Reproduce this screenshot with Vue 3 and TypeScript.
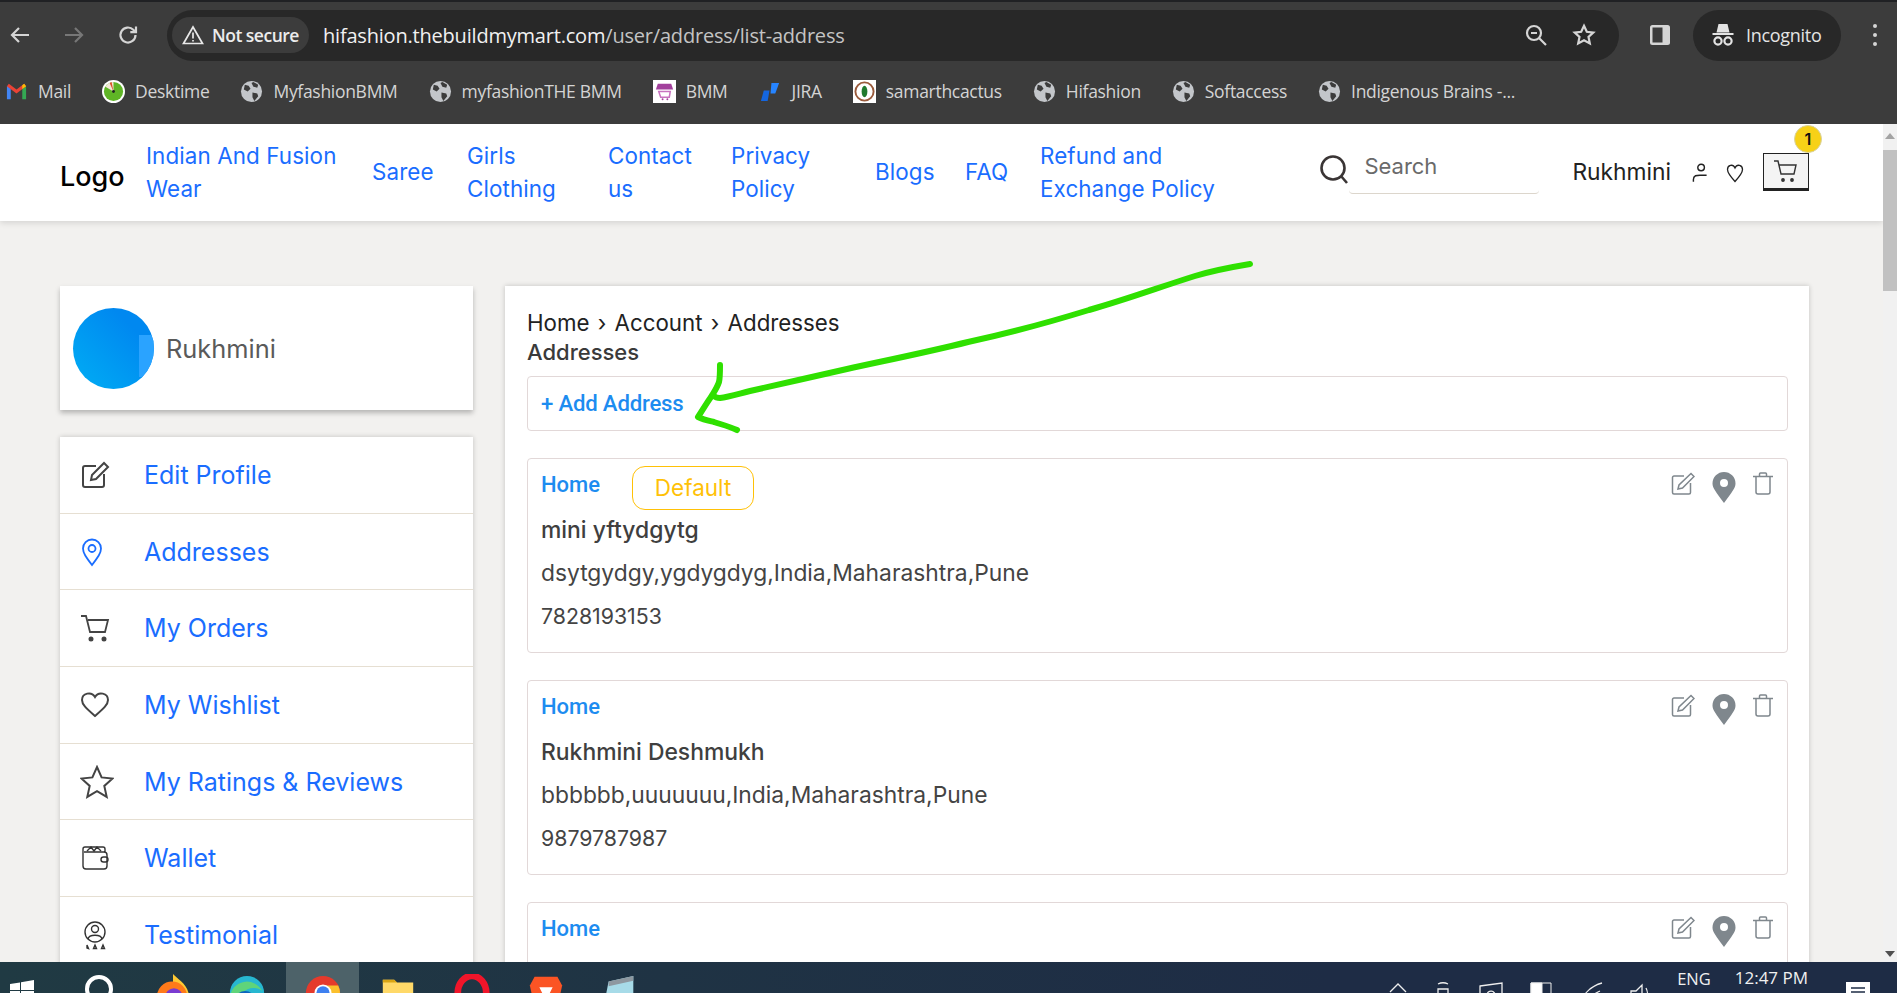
<script setup lang="ts">
const bookmarks = [
  { name: 'Mail', icon: 'gmail' },
  { name: 'Desktime', icon: 'desktime' },
  { name: 'MyfashionBMM', icon: 'globe' },
  { name: 'myfashionTHE BMM', icon: 'globe' },
  { name: 'BMM', icon: 'bmm' },
  { name: 'JIRA', icon: 'jira' },
  { name: 'samarthcactus', icon: 'cactus' },
  { name: 'Hifashion', icon: 'globe' },
  { name: 'Softaccess', icon: 'globe' },
  { name: 'Indigenous Brains -...', icon: 'globe' },
]

const navLinks = [
  { label: 'Indian And Fusion Wear', width: 194 },
  { label: 'Saree', width: 63 },
  { label: 'Girls Clothing', width: 109 },
  { label: 'Contact us', width: 91 },
  { label: 'Privacy Policy', width: 112 },
  { label: 'Blogs', width: 58 },
  { label: 'FAQ', width: 43 },
  { label: 'Refund and Exchange Policy', width: 180 },
]

const menu = [
  { label: 'Edit Profile', icon: 'edit' },
  { label: 'Addresses', icon: 'pin' },
  { label: 'My Orders', icon: 'cart' },
  { label: 'My Wishlist', icon: 'heart' },
  { label: 'My Ratings & Reviews', icon: 'star' },
  { label: 'Wallet', icon: 'wallet' },
  { label: 'Testimonial', icon: 'badge' },
]

// the third card runs below the fold, only its heading shows
const addresses = [
  { type: 'Home', isDefault: true, name: 'mini yftydgytg', line: 'dsytgydgy,ygdygdyg,India,Maharashtra,Pune', phone: '7828193153' },
  { type: 'Home', isDefault: false, name: 'Rukhmini Deshmukh', line: 'bbbbbb,uuuuuuu,India,Maharashtra,Pune', phone: '9879787987' },
  { type: 'Home', isDefault: false, name: '', line: '', phone: '' },
]
</script>

<template>
  <div class="screen">
    <header class="browser">
      <div class="tabstrip"></div>
      <div class="toolbar">
        <svg class="tool" viewBox="0 0 24 24" fill="none" stroke="#d5d5d5" stroke-width="2.2"><path d="M21 12H4M11 5l-7 7 7 7" /></svg>
        <svg class="tool" viewBox="0 0 24 24" fill="none" stroke="#777" stroke-width="2.2"><path d="M3 12h17M13 5l7 7-7 7" /></svg>
        <svg class="tool" viewBox="0 0 24 24" fill="none" stroke="#d5d5d5" stroke-width="2.2"><path d="M19.500 12a7.500 7.500 0 1 1-2.200-5.300L20 9.200M20 3.500v5.700h-5.700" /></svg>
        <div class="omnibox">
          <div class="secure">
            <svg width="22" height="20" viewBox="0 0 22 20" fill="none" stroke="#e8e8e8" stroke-width="1.7"><path d="M11 2 20.500 18.500h-19z" /><path d="M11 7.500v6M11 15v1.600" /></svg>
            <span>Not secure</span>
          </div>
          <span class="url">hifashion.thebuildmymart.com<span class="url-path">/user/address/list-address</span></span>
          <svg class="omni-icon zoom-icon" viewBox="0 0 24 24" fill="none" stroke="#d5d5d5" stroke-width="2.2"><circle cx="10" cy="10" r="7" /><path d="M15 15l7 7M7 10h6" /></svg>
          <svg class="omni-icon" viewBox="0 0 24 24" fill="none" stroke="#d5d5d5" stroke-width="2.2"><path d="M12 2.800l2.800 6 6.500.8-4.800 4.400 1.300 6.400-5.800-3.200-5.800 3.200 1.300-6.400L2.700 9.600l6.500-.8z" /></svg>
        </div>
        <svg class="side-panel" viewBox="0 0 24 24"><rect x="2" y="2" width="20" height="20" rx="2.500" fill="#d5d5d5" /><rect x="4.500" y="4.500" width="10" height="15" fill="#3c3c3c" /></svg>
        <div class="incognito">
          <svg width="24" height="24" viewBox="0 0 24 24" fill="#e4e4e4"><path d="M7.500 1h9l2 8.500h-13zM1.500 10h21v2h-21z" /><circle cx="7" cy="18" r="3.600" fill="none" stroke="#e4e4e4" stroke-width="2.200" /><circle cx="17" cy="18" r="3.600" fill="none" stroke="#e4e4e4" stroke-width="2.200" /></svg>
          <span>Incognito</span>
        </div>
        <div class="kebab"><i></i><i></i><i></i></div>
      </div>
      <div class="bookmarks">
        <div v-for="b in bookmarks" :key="b.name" class="bookmark">
          <svg v-if="b.icon === 'gmail'" class="fav" viewBox="0 0 24 24"><path d="M2 20V6l4 3v11z" fill="#4285f4" /><path d="M22 20V6l-4 3v11z" fill="#34a853" /><path d="M2 6.500 4 4l8 6 8-6 2 2.500-10 7.500z" fill="#ea4335" /><path d="M18 5.500 20 4l2 2.500L18 9.500z" fill="#fbbc04" /></svg>
          <svg v-else-if="b.icon === 'desktime'" class="fav" viewBox="0 0 24 24"><circle cx="12" cy="12" r="12" fill="#fff" /><circle cx="12" cy="12" r="10" fill="#5fb526" /><path d="M12 12V2A10 10 0 0 0 3.500 7z" fill="#f3e7d6" /><path d="M12 12 8 3l2-.8z" fill="#d8512a" /><circle cx="12" cy="12" r="1.500" fill="#222" /></svg>
          <svg v-else-if="b.icon === 'globe'" class="fav" viewBox="0 0 24 24"><circle cx="12" cy="12" r="11" fill="#c3c6ca" /><path d="M5 5l4 1 2 3-3 3-4-2zM13 13l5 1 1 3-4 5-2-4zM14 2l5 3-1 3-4-1-2-4z" fill="#3c3c3c" /></svg>
          <svg v-else-if="b.icon === 'bmm'" class="fav" viewBox="0 0 24 24"><rect width="24" height="24" fill="#fff" /><path d="M5 4h14l2 6H3z" fill="#a2409c" /><path d="M6 12h12l-1 6H8z" fill="none" stroke="#c873c0" stroke-width="1.600" /><circle cx="10" cy="20" r="1" fill="#a2409c" /><circle cx="15" cy="20" r="1" fill="#a2409c" /></svg>
          <svg v-else-if="b.icon === 'jira'" class="fav" viewBox="0 0 24 24"><path d="M13 3h8l-4 11h-5z" fill="#2684ff" /><path d="M5 11h6l-2 11H2z" fill="#1466e0" /></svg>
          <svg v-else class="fav" viewBox="0 0 24 24"><rect width="24" height="24" fill="#fff" /><circle cx="12" cy="12" r="9.500" fill="none" stroke="#9a5b3c" stroke-width="2" /><ellipse cx="12" cy="12" rx="3" ry="6" fill="#1f7a2e" /></svg>
          <span>{{ b.name }}</span>
        </div>
      </div>
    </header>

    <div class="viewport">
      <div class="page">
        <nav class="site-nav">
          <span class="logo">Logo</span>
          <div class="nav-links">
            <a v-for="l in navLinks" :key="l.label" class="nav-link" :style="{ width: l.width + 'px' }">{{ l.label }}</a>
          </div>
          <div class="search">
            <svg width="30" height="30" viewBox="0 0 30 30" fill="none" stroke="#3a3535" stroke-width="2.600"><circle cx="14" cy="14" r="11.500" /><path d="M22 22l6 7" /></svg>
            <span class="search-field">Search</span>
          </div>
          <span class="nav-user">Rukhmini</span>
          <svg class="nav-icon user-icon" viewBox="0 0 16 20" fill="none" stroke="#222" stroke-width="1.300"><circle cx="9" cy="5" r="3" /><path d="M2 18v-2c0-4 3-4 6-4h6" /></svg>
          <svg class="nav-icon heart-icon" viewBox="0 0 18 20" fill="none" stroke="#222" stroke-width="1.300"><path d="M9 18.500C4 13 1.500 10 1.500 6.500 1.500 2 7 .5 9 5c2-4.500 7.500-3 7.500 1.500 0 3.500-2.500 6.500-7.500 12z" /></svg>
          <div class="cart-box">
            <svg width="26" height="26" viewBox="0 0 26 26" fill="none" stroke="#333" stroke-width="1.400"><path d="M1 3h4l3 13h13l2-9H6" /><circle cx="10" cy="22" r="1.200" fill="#333" /><circle cx="19" cy="22" r="1.200" fill="#333" /></svg>
            <span class="cart-count">1</span>
          </div>
        </nav>

        <div class="layout">
          <aside class="sidebar">
            <div class="profile">
              <div class="avatar"><i></i></div>
              <span>Rukhmini</span>
            </div>
            <ul class="menu">
              <li v-for="m in menu" :key="m.label" class="menu-row">
                <svg v-if="m.icon === 'edit'" class="menu-icon" viewBox="0 0 30 30" fill="none" stroke="#444" stroke-width="2"><path d="M16 6H5a2 2 0 0 0-2 2v17a2 2 0 0 0 2 2h17a2 2 0 0 0 2-2V14" /><path d="M11 20l1-5L24 3l4 4-12 12z" /></svg>
                <svg v-else-if="m.icon === 'pin'" class="menu-icon" viewBox="0 0 30 30" fill="none" stroke="#1a6dff" stroke-width="1.800"><path d="M12 28C6 20 3 16 3 11.500a9 9 0 0 1 18 0C21 16 18 20 12 28z" /><circle cx="12" cy="11.500" r="3.500" /></svg>
                <svg v-else-if="m.icon === 'cart'" class="menu-icon" viewBox="0 0 30 30" fill="none" stroke="#444" stroke-width="1.800"><path d="M1 3h5l4 16h15l3-12H8" /><circle cx="11" cy="26" r="1.600" fill="#444" /><circle cx="24" cy="26" r="1.600" fill="#444" /></svg>
                <svg v-else-if="m.icon === 'heart'" class="menu-icon" viewBox="0 0 30 30" fill="none" stroke="#444" stroke-width="2"><path d="M15 26C6 18 2 14.500 2 10c0-7 9.500-9 13-3 3.500-6 13-4 13 3 0 4.500-4 8-13 16z" /></svg>
                <svg v-else-if="m.icon === 'star'" class="menu-icon star" viewBox="0 0 34 34" fill="none" stroke="#444" stroke-width="2"><path d="M17 2l4.600 10.400 11 1.100-8.300 7.400 2.400 11L17 26.200 7.300 31.900l2.400-11-8.300-7.400 11-1.100z" /></svg>
                <svg v-else-if="m.icon === 'wallet'" class="menu-icon" viewBox="0 0 30 30" fill="none" stroke="#333" stroke-width="1.400"><path d="M4 9h20a3 3 0 0 1 3 3v11a3 3 0 0 1-3 3H6a3 3 0 0 1-3-3V6a2 2 0 0 1 2-2h18a2 2 0 0 1 2 2v3" /><path d="M7 8l4-4 3 4 3-4 4 4" /><rect x="21" y="14" width="7" height="5" rx="2.500" /></svg>
                <svg v-else class="menu-icon" viewBox="0 0 30 30" fill="none" stroke="#333" stroke-width="1.400"><circle cx="15" cy="12" r="10" /><circle cx="15" cy="9" r="3.500" /><path d="M8 19c1-5 13-5 14 0" /><path d="M7 25l1.500 3.500L7 28zM15 25l1.500 3.500h-3zM23 25l1.500 3.500h-3z" /></svg>
                <span>{{ m.label }}</span>
              </li>
            </ul>
          </aside>

          <main class="content">
            <div class="crumbs">Home <b>›</b> Account <b>›</b> Addresses</div>
            <h1 class="title">Addresses</h1>
            <div class="add-box">+ Add Address</div>
            <section v-for="(a, i) in addresses" :key="i" class="address">
              <div class="address-head">
                <span class="address-type">{{ a.type }}</span>
                <span v-if="a.isDefault" class="default-tag">Default</span>
              </div>
              <template v-if="a.name">
                <div class="address-name">{{ a.name }}</div>
                <div class="address-line">{{ a.line }}</div>
                <div class="address-line phone">{{ a.phone }}</div>
              </template>
              <div class="address-actions">
                <svg width="24" height="24" viewBox="0 0 24 24" fill="none" stroke="#7f878d" stroke-width="1.500"><path d="M13 4H3a1.500 1.500 0 0 0-1.500 1.500v15A1.500 1.500 0 0 0 3 22h15a1.500 1.500 0 0 0 1.500-1.500V11" /><path d="M7 17l1-4L20 1.500l3 3L11.500 16z" /></svg>
                <svg width="24" height="31" viewBox="0 0 24 31" fill="#7f878d"><path fill-rule="evenodd" d="M12 31C4 20 .5 16 .5 11.500a11.500 11.500 0 0 1 23 0C23.500 16 20 20 12 31zm0-16a4 4 0 1 0 0-8 4 4 0 0 0 0 8z" /></svg>
                <svg width="20" height="23" viewBox="0 0 20 23" fill="none" stroke="#7f878d" stroke-width="1.500"><path d="M0 4.500h20M3 4.500V20a2 2 0 0 0 2 2h10a2 2 0 0 0 2-2V4.500M6.500 4.500V2a1 1 0 0 1 1-1h5a1 1 0 0 1 1 1v2.500" /></svg>
              </div>
            </section>
          </main>
        </div>
      </div>

      <div class="scrollbar">
        <span class="arrow-up"></span>
        <div class="thumb"></div>
        <span class="arrow-down"></span>
      </div>

      <!-- hand-drawn green arrow sits over the page -->
      <svg class="scribble" width="1897" height="869" viewBox="0 124 1897 869" fill="none" stroke="#2fe000" stroke-width="6" stroke-linecap="round" stroke-linejoin="round">
        <path d="M1250 264C1232 267 1215 270 1195 276 C1160 287 1125 300 1089 310 C1050 322 1010 333 968 342 C928 352 888 360 847 369 C815 376 782 384 750 391 C738 394 728 397 720 398 C717 398 715 397 714 396" />
        <path d="M720 365C720 372 720 378 719 382 C717 388 714 392 711 397 C706 404 702 411 698 417 C704 420 710 421 714 422 C720 424 731 427 737 430" />
      </svg>
    </div>

    <footer class="taskbar">
      <svg class="win" viewBox="0 0 24 24" fill="#fff"><path d="M0 5l10-1.500V11H0zM11 3.300 24 1v10H11zM0 12h10v8L0 18.500zM11 12h13v10l-13-2z" /></svg>
      <span class="cortana"></span>
      <svg class="task-app firefox" viewBox="0 0 40 40"><path d="M20 0c4 5 16 10 17 24H20z" fill="#ffc933" /><circle cx="19" cy="24" r="16" fill="#ff7a1a" /><circle cx="21" cy="24" r="9" fill="#7a3bd1" /></svg>
      <svg class="task-app edge" viewBox="0 0 40 40"><circle cx="20" cy="20" r="18" fill="#27b7d0" /><path d="M2 24a18 18 0 0 1 34-6c-6-6-20-4-22 6z" fill="#5fd47a" /><circle cx="18" cy="30" r="12" fill="#0c64bd" /><circle cx="21" cy="32" r="7" fill="#203a43" /></svg>
      <div class="task-active">
        <svg class="task-app" viewBox="0 0 40 40"><circle cx="20" cy="20" r="18" fill="#e53a2c" /><path d="M20 20 4 30a18 18 0 0 0 16 8z" fill="#34a853" /><path d="M20 12h16a18 18 0 0 1-8 24z" fill="#fbc02d" /><circle cx="20" cy="20" r="9" fill="#fff" /><circle cx="20" cy="20" r="7" fill="#3e80f0" /></svg>
      </div>
      <svg class="task-app folder" viewBox="0 0 40 40"><path d="M4 6h12l3 3h17v28H4z" fill="#ffd968" /><path d="M4 6h12l3 3h-15z" fill="#d9a514" /></svg>
      <svg class="task-app opera" viewBox="0 0 40 40"><ellipse cx="20" cy="20" rx="15" ry="18" fill="none" stroke="#f0152a" stroke-width="7" /></svg>
      <svg class="task-app brave" viewBox="0 0 40 40"><path d="M8 3h24l5 9-3 14H6L3 12z" fill="#fb5424" /><path d="M13 14h14l-4 8v6h-6v-6z" fill="#fff" /></svg>
      <svg class="task-app notes" viewBox="0 0 40 40"><path d="M8 8 34 2v36H2z" fill="#a7dbe8" /><path d="M8 8 34 2v5L8 13z" fill="#8e98a0" /></svg>

      <div class="tray">
        <svg width="18" height="11" viewBox="0 0 18 11" fill="none" stroke="#eee" stroke-width="1.300"><path d="M1 10l8-8 8 8" /></svg>
        <svg width="18" height="22" viewBox="0 0 18 22" fill="none" stroke="#eee" stroke-width="1.300"><path d="M4 2c3-1.500 7-1.500 10 0M4 7h10v14H4z" /></svg>
        <svg width="24" height="24" viewBox="0 0 24 24" fill="none" stroke="#eee" stroke-width="1.300"><path d="M1 4l22-3v22H1z" /><path d="M8 13a4 4 0 1 1 3 4" /></svg>
        <svg width="22" height="16" viewBox="0 0 22 16" fill="#fff" stroke="#eee" stroke-width="1"><path d="M1 1h20v15H1z" fill="none" /><path d="M1 1h11v15H1z" /></svg>
        <svg width="24" height="22" viewBox="0 0 24 22" fill="none" stroke="#eee" stroke-width="1.300"><path d="M1 22C4 12 12 4 23 1M8 22c2-6 6-10 13-13" /></svg>
        <svg width="24" height="24" viewBox="0 0 24 24" fill="none" stroke="#eee" stroke-width="1.300"><path d="M1 9h5l6-6v20l-6-6H1zM16 6c2 4 2 10 0 14" /></svg>
        <span class="tray-lang">ENG</span>
        <span class="tray-time">12:47 PM</span>
        <svg class="notify" width="26" height="22" viewBox="0 0 26 22"><rect x="1" width="24" height="20" fill="#fff" /><path d="M6 6h14M6 10h14" stroke="#1e2c45" stroke-width="1.600" /></svg>
      </div>
    </footer>
  </div>
</template>

<style scoped>
.screen {
  width: 1897px;
  height: 993px;
  display: flex;
  flex-direction: column;
  overflow: hidden;
  font-family: Inter, "Liberation Sans", sans-serif;
}

/* browser chrome */
.browser {
  flex: none;
  height: 124px;
  background: #3c3c3c;
  font-family: "Open Sans", "Liberation Sans", sans-serif;
}

.tabstrip {
  height: 2px;
  background: #202124;
}

.toolbar {
  height: 60px;
  display: flex;
  align-items: center;
  padding: 6px 0 0 8px;
  box-sizing: border-box;
}

.tool {
  width: 24px;
  height: 24px;
  margin-right: 30px;
}

.omnibox {
  margin-left: -3px;
  width: 1452px;
  height: 51px;
  background: #282828;
  border-radius: 26px;
  display: flex;
  align-items: center;
  padding: 0 23px 0 5px;
  box-sizing: border-box;
}

.secure {
  height: 36px;
  width: 137px;
  padding-left: 10px;
  box-sizing: border-box;
  background: #3c3c3c;
  border-radius: 18px;
  display: flex;
  align-items: center;
  gap: 8px;
  color: #ececec;
  font-size: 17.5px;
  font-weight: 600;
  letter-spacing: -0.5px;
}

.url {
  margin-left: 14px;
  color: #f1f1f1;
  font-size: 20px;
  letter-spacing: -0.2px;
}

.url-path {
  color: #c4c4c4;
}

.omni-icon {
  width: 24px;
  height: 24px;
}

.zoom-icon {
  margin-left: auto;
  margin-right: 24px;
}

.side-panel {
  width: 24px;
  height: 24px;
  margin-left: 29px;
}

.incognito {
  margin-left: 21px;
  width: 148px;
  height: 51px;
  padding-left: 18px;
  box-sizing: border-box;
  background: #282828;
  border-radius: 26px;
  display: flex;
  align-items: center;
  gap: 11px;
  color: #e4e4e4;
  font-size: 18px;
  letter-spacing: -0.3px;
}

.kebab {
  margin-left: 32px;
  display: flex;
  flex-direction: column;
  gap: 5px;
}

.kebab i {
  width: 4px;
  height: 4px;
  border-radius: 50%;
  background: #d5d5d5;
}

.bookmarks {
  height: 62px;
  box-sizing: border-box;
  padding: 0 0 4px 5px;
  display: flex;
  align-items: center;
  gap: 31px;
  color: #d4d4d4;
  font-size: 17.5px;
  letter-spacing: -0.3px;
}

.bookmark {
  display: flex;
  align-items: center;
  gap: 10px;
  white-space: nowrap;
}

.fav {
  width: 23px;
  height: 23px;
  flex: none;
}

/* page */
.viewport {
  position: relative;
  flex: 1;
  min-height: 0;
  display: flex;
  overflow: hidden;
}

.page {
  flex: 1;
  min-width: 0;
  background: #f2f1ef;
  overflow: hidden;
}

.site-nav {
  height: 97px;
  padding: 0 74px 0 60px;
  background: #fff;
  display: flex;
  align-items: center;
  box-shadow: 0 2px 6px rgba(0, 0, 0, 0.12);
}

.logo {
  width: 86px;
  flex: none;
  padding-top: 8px;
  font-size: 27px;
  font-weight: 500;
  color: #000;
  letter-spacing: 0;
}

.nav-links {
  display: flex;
  align-items: center;
  gap: 32px;
  margin-bottom: 2px;
}

.nav-link {
  flex: none;
  font-size: 22.4px;
  line-height: 33px;
  color: #1a6dff;
  letter-spacing: 0.1px;
}

.search {
  margin-left: auto;
  margin-bottom: 8px;
  display: flex;
  align-items: center;
}

.search-field {
  width: 190px;
  height: 50px;
  padding-left: 15px;
  box-sizing: border-box;
  border-bottom: 1px solid #dcd6cc;
  border-radius: 0 0 4px 4px;
  font-size: 22px;
  line-height: 44px;
  color: #6a6a6a;
}

.nav-user {
  margin-left: 33px;
  margin-bottom: 2px;
  font-size: 22.8px;
  color: #222;
}

.nav-icon {
  flex: none;
  width: 18px;
  height: 22px;
}

.user-icon {
  margin-left: 20px;
}

.heart-icon {
  margin-left: 17px;
}

.cart-box {
  position: relative;
  flex: none;
  margin-left: 19px;
  margin-bottom: 2px;
  width: 46px;
  height: 38px;
  border: 1px solid #222;
  border-bottom-width: 3px;
  box-sizing: border-box;
  background: #f4f4f4;
  display: flex;
  align-items: center;
  justify-content: center;
}

.cart-count {
  position: absolute;
  top: -29px;
  right: -14px;
  width: 28px;
  height: 28px;
  border-radius: 50%;
  background: #f7d117;
  border: 1px solid #d9d2a0;
  box-sizing: border-box;
  text-align: center;
  font-size: 16px;
  line-height: 26px;
  font-weight: 600;
  color: #111;
}

.layout {
  display: flex;
  align-items: flex-start;
  gap: 32px;
  padding: 65px 74px 0 60px;
}

.sidebar {
  width: 413px;
  flex: none;
}

.profile {
  height: 124px;
  background: #fff;
  display: flex;
  align-items: center;
  padding-left: 13px;
  gap: 12px;
  box-shadow: 0 3px 5px rgba(0, 0, 0, 0.25);
  font-size: 25.4px;
  color: #5a5a5a;
}

.avatar {
  position: relative;
  width: 81px;
  height: 81px;
  border-radius: 50%;
  overflow: hidden;
  background: linear-gradient(45deg, #00aef4, #0088f0 75%);
}

.avatar i {
  position: absolute;
  right: 0;
  top: 27px;
  width: 15px;
  height: 42px;
  background: #2aa3ff;
}

.menu {
  list-style: none;
  margin: 27px 0 0;
  padding: 0;
  background: #fff;
  box-shadow: 0 0 5px rgba(0, 0, 0, 0.2);
}

.menu-row {
  height: 76.7px;
  box-sizing: border-box;
  display: flex;
  align-items: center;
  padding-left: 20px;
  border-bottom: 1px solid #e6dfd2;
  font-size: 25px;
  color: #1a6dff;
}

.menu-icon {
  width: 30px;
  height: 30px;
  flex: none;
  margin-right: 34px;
}

.menu-icon.star {
  width: 34px;
  height: 34px;
  margin-right: 30px;
}

.content {
  flex: 1;
  min-width: 0;
  background: #fff;
  padding: 22px 21px 0 22px;
  height: 900px;
  box-sizing: border-box;
  box-shadow: 0 0 5px rgba(0, 0, 0, 0.2);
  color: #333;
}

.crumbs {
  font-size: 22.3px;
  line-height: 30px;
  color: #222;
}

.crumbs b {
  font-weight: 400;
  margin: 0 2px;
}

.title {
  margin: 0;
  font-size: 22px;
  line-height: 28px;
  font-weight: 500;
  color: #3a3a3a;
}

.add-box {
  margin-top: 10px;
  height: 55px;
  box-sizing: border-box;
  border: 1px solid #e2d8d8;
  border-radius: 4px;
  padding-left: 13px;
  font-family: Roboto, "Liberation Sans", sans-serif;
  font-size: 22.2px;
  line-height: 52px;
  font-weight: 500;
  color: #1d8cf0;
  letter-spacing: -0.2px;
}

.address {
  position: relative;
  margin-top: 27px;
  height: 195px;
  box-sizing: border-box;
  border: 1px solid #e2d8d8;
  border-radius: 4px;
  padding: 7px 13px 0;
}

.address-head {
  height: 42px;
  display: flex;
  align-items: flex-start;
}

.address-type {
  margin-top: 6px;
  font-family: Roboto, "Liberation Sans", sans-serif;
  font-size: 22px;
  font-weight: 500;
  color: #1d8cf0;
}

.default-tag {
  margin-left: 32px;
  width: 122px;
  height: 44px;
  box-sizing: border-box;
  border: 1px solid #ffc107;
  border-radius: 13px;
  text-align: center;
  font-size: 22.5px;
  line-height: 42px;
  color: #ffc107;
}

.address-name {
  margin-top: 7px;
  font-size: 22.9px;
  line-height: 30px;
  font-weight: 500;
  color: #3f3f3f;
}

.address-line {
  margin-top: 13px;
  font-size: 22.8px;
  line-height: 30px;
  color: #444;
}

.address-line.phone {
  font-size: 21.3px;
}

.address-actions {
  position: absolute;
  top: 13px;
  right: 14px;
  display: flex;
  align-items: flex-start;
  gap: 17px;
}

.scrollbar {
  position: relative;
  flex: none;
  width: 14px;
  background: #f1f1f1;
}

.arrow-up,
.arrow-down {
  position: absolute;
  left: 2px;
  border-left: 5px solid transparent;
  border-right: 5px solid transparent;
}

.arrow-up {
  top: 9px;
  border-bottom: 6px solid #a3a3a3;
}

.arrow-down {
  bottom: 5px;
  border-top: 6px solid #505050;
}

.thumb {
  position: absolute;
  top: 26px;
  left: 0;
  right: 0;
  height: 141px;
  background: #c1c1c1;
}

.scribble {
  position: absolute;
  left: 0;
  top: 0;
  pointer-events: none;
}

/* taskbar */
.taskbar {
  flex: none;
  height: 31px;
  display: flex;
  align-items: flex-start;
  overflow: hidden;
  background: linear-gradient(90deg, #203a43, #1e2c45 70%);
  color: #f0f0f0;
  font-family: "Open Sans", "Liberation Sans", sans-serif;
}

.win {
  width: 24px;
  height: 24px;
  margin: 17px 0 0 10px;
}

.cortana {
  flex: none;
  width: 28px;
  height: 28px;
  margin: 13px 0 0 51px;
  box-sizing: border-box;
  border: 4px solid #fff;
  border-radius: 50%;
}

.task-app {
  flex: none;
  width: 38px;
  height: 38px;
  margin-top: 12px;
}

.firefox {
  margin-left: 41px;
}

.edge {
  margin-left: 36px;
}

.task-active {
  flex: none;
  width: 73px;
  height: 31px;
  margin-left: 20px;
  background: #4d6269;
  text-align: center;
}

.folder {
  margin-left: 20px;
}

.opera {
  margin-left: 36px;
}

.brave {
  margin-left: 36px;
}

.notes {
  margin-left: 36px;
}

.tray {
  margin-left: auto;
  padding-right: 26px;
  display: flex;
  align-items: flex-start;
  gap: 27px;
}

.tray svg {
  margin-top: 20px;
}

.tray-lang {
  margin-left: -4px;
  margin-top: 5px;
  font-size: 16.5px;
  line-height: 24px;
}

.tray-time {
  margin-left: -3px;
  margin-top: 5px;
  font-size: 17px;
  line-height: 22px;
}

.tray .notify {
  margin: 20px 0 0 10px;
}
</style>

<style>
html, body {
  margin: 0;
  overflow: hidden;
}
</style>
